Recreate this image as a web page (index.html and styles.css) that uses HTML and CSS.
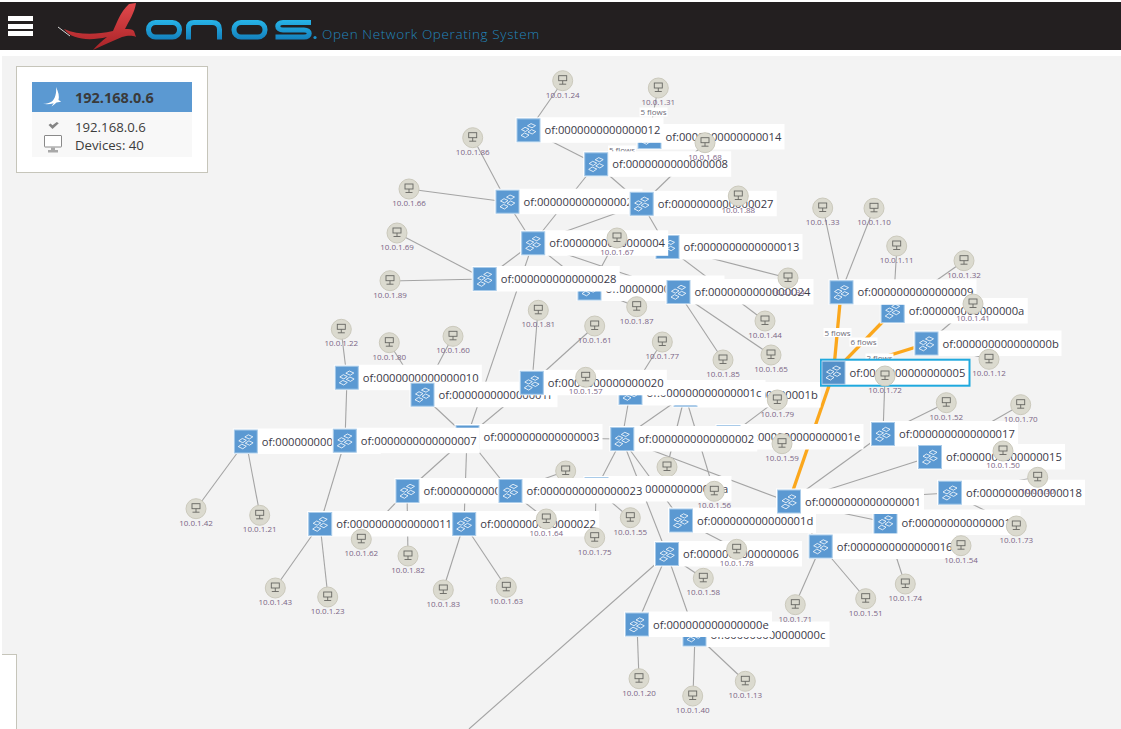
FILE: index.html
```html
<!DOCTYPE html>
<html lang="en">
<head>
<meta charset="utf-8">
<title>ONOS</title>
<link rel="stylesheet" href="styles.css">
</head>
<body>
<header class="masthead">
  <button class="menu" aria-label="Menu"><span></span><span></span><span></span></button>
  <svg class="logo" viewBox="55 2 265 48" role="img" aria-label="ONOS logo">
    <defs>
      <linearGradient id="wing" x1="0" y1="0" x2="0" y2="1"><stop offset="0" stop-color="#e2494c"/><stop offset="1" stop-color="#a82327"/></linearGradient>
      <linearGradient id="blue" gradientUnits="userSpaceOnUse" x1="0" y1="20" x2="0" y2="40"><stop offset="0" stop-color="#27b4e8"/><stop offset="1" stop-color="#137fbc"/></linearGradient>
    </defs>
    <path class="streak" d="M58 27 L70 36"/>
    <path fill="url(#wing)" d="M64 29 C78 35 95 35 113 31 C117 23 120 12 129 4 L136 3 C135 12 129 21 125 29 C129 29 132 29 134 31 L136 37 C131 35 127 36 122 37 C112 41 102 46 93 50 C97 45 102 41 107 37 C90 41 72 40 64 29 Z"/>
    <rect class="wm" x="148.500" y="22.500" width="31" height="14.500" rx="7"/>
    <path class="wm" d="M188.500 39.500 V28 C188.500 24.500 190.500 22.500 194 22.500 H212 C217 22.500 219.500 25 219.500 29.500 V39.500"/>
    <rect class="wm" x="234" y="22.500" width="31" height="14.500" rx="7"/>
    <path class="wm" d="M311 22.500 H283 C276 22.500 276 30 283 30 H304 C311 30 311 37 304 37 H275.500"/>
    <circle class="dot" cx="315" cy="37.500" r="1.600"/>
  </svg>
  <h1 class="tagline">Open Network Operating System</h1>
</header>

<main class="stage">
  <svg class="topo" viewBox="2 56 1119 673" aria-label="Network topology">
    <defs>
      <symbol id="sw" viewBox="0 0 23 23" overflow="visible">
        <rect class="swbg" x="0" y="0" width="23" height="23"/>
        <g class="swglyph">
          <path d="M10.500 7 L14 4.800 L18.500 6.800 L15 9 Z"/>
          <path d="M4.500 10.800 L8 8.500 L12 10.300 L8.500 12.700 Z"/>
          <path d="M11 13.200 L14.600 10.800 L18.800 12.800 L15.200 15.200 Z"/>
          <path d="M4 16.600 L7.500 14.200 L12 16.200 L8.500 18.800 Z"/>
        </g>
      </symbol>
      <g id="hostglyph" class="hg">
        <circle class="hc" r="10"/>
        <rect class="hi" x="-4" y="-5" width="8" height="5"/>
        <path class="hi" d="M0 0 V3.500 M-3.500 3.500 H3.500"/>
      </g>
    </defs>

    <g class="links">
      <line x1="563" y1="81" x2="529" y2="130"/>
      <line x1="658" y1="88" x2="649" y2="137"/>
      <line x1="705" y1="143" x2="642" y2="204"/>
      <line x1="473" y1="138" x2="507" y2="202"/>
      <line x1="409" y1="189" x2="507" y2="202"/>
      <line x1="397" y1="233" x2="485" y2="279"/>
      <line x1="390" y1="281" x2="485" y2="279"/>
      <line x1="617" y1="238" x2="590" y2="288"/>
      <line x1="637" y1="307" x2="590" y2="288"/>
      <line x1="538" y1="310" x2="532" y2="383"/>
      <line x1="595" y1="326" x2="532" y2="383"/>
      <line x1="662" y1="342" x2="630" y2="393"/>
      <line x1="723" y1="360" x2="678" y2="292"/>
      <line x1="771" y1="355" x2="678" y2="292"/>
      <line x1="765" y1="321" x2="667" y2="247"/>
      <line x1="788" y1="278" x2="667" y2="247"/>
      <line x1="777" y1="400" x2="728" y2="437"/>
      <line x1="885" y1="376" x2="883" y2="434"/>
      <line x1="946" y1="403" x2="883" y2="434"/>
      <line x1="1021" y1="405" x2="930" y2="457"/>
      <line x1="973" y1="304" x2="926" y2="344"/>
      <line x1="989" y1="359" x2="926" y2="344"/>
      <line x1="964" y1="261" x2="893" y2="311"/>
      <line x1="897" y1="246" x2="893" y2="311"/>
      <line x1="874" y1="208" x2="841" y2="292"/>
      <line x1="823" y1="208" x2="841" y2="292"/>
      <line x1="1038" y1="477" x2="950" y2="493"/>
      <line x1="1016" y1="526" x2="950" y2="493"/>
      <line x1="905" y1="584" x2="885" y2="522"/>
      <line x1="866" y1="599" x2="821" y2="546"/>
      <line x1="795" y1="605" x2="821" y2="546"/>
      <line x1="737" y1="549" x2="681" y2="520"/>
      <line x1="703" y1="578" x2="667" y2="554"/>
      <line x1="630" y1="518" x2="596" y2="489"/>
      <line x1="595" y1="538" x2="596" y2="489"/>
      <line x1="546" y1="519" x2="510" y2="491"/>
      <line x1="667" y1="467" x2="685" y2="395"/>
      <line x1="714" y1="491" x2="685" y2="395"/>
      <line x1="566" y1="471" x2="510" y2="491"/>
      <line x1="529" y1="130" x2="596" y2="164"/>
      <line x1="596" y1="164" x2="533" y2="243"/>
      <line x1="596" y1="164" x2="642" y2="204"/>
      <line x1="507" y1="202" x2="533" y2="243"/>
      <line x1="533" y1="243" x2="642" y2="204"/>
      <line x1="642" y1="204" x2="667" y2="247"/>
      <line x1="533" y1="243" x2="485" y2="279"/>
      <line x1="533" y1="243" x2="467" y2="437"/>
      <line x1="533" y1="243" x2="590" y2="288"/>
      <line x1="533" y1="243" x2="678" y2="292"/>
      <line x1="347" y1="378" x2="345" y2="441"/>
      <line x1="341" y1="329" x2="347" y2="378"/>
      <line x1="389" y1="343" x2="422" y2="395"/>
      <line x1="453" y1="336" x2="422" y2="395"/>
      <line x1="422" y1="395" x2="467" y2="437"/>
      <line x1="532" y1="383" x2="467" y2="437"/>
      <line x1="467" y1="437" x2="622" y2="439"/>
      <line x1="467" y1="437" x2="407" y2="491"/>
      <line x1="467" y1="437" x2="464" y2="524"/>
      <line x1="467" y1="437" x2="510" y2="491"/>
      <line x1="345" y1="441" x2="320" y2="524"/>
      <line x1="246" y1="441" x2="196" y2="509"/>
      <line x1="246" y1="441" x2="260" y2="515"/>
      <line x1="320" y1="524" x2="275" y2="588"/>
      <line x1="320" y1="524" x2="328" y2="597"/>
      <line x1="464" y1="524" x2="443" y2="590"/>
      <line x1="464" y1="524" x2="506" y2="587"/>
      <line x1="407" y1="491" x2="361" y2="539"/>
      <line x1="407" y1="491" x2="408" y2="556"/>
      <line x1="622" y1="439" x2="630" y2="393"/>
      <line x1="622" y1="439" x2="685" y2="395"/>
      <line x1="622" y1="439" x2="596" y2="489"/>
      <line x1="622" y1="439" x2="667" y2="554"/>
      <line x1="622" y1="439" x2="681" y2="520"/>
      <line x1="622" y1="439" x2="789" y2="502"/>
      <line x1="789" y1="502" x2="883" y2="434"/>
      <line x1="789" y1="502" x2="930" y2="457"/>
      <line x1="789" y1="502" x2="950" y2="493"/>
      <line x1="789" y1="502" x2="885" y2="522"/>
      <line x1="789" y1="502" x2="821" y2="546"/>
      <line x1="667" y1="554" x2="637" y2="624"/>
      <line x1="667" y1="554" x2="695" y2="634"/>
      <line x1="667" y1="554" x2="469" y2="729"/>
      <line x1="637" y1="624" x2="639" y2="679"/>
      <line x1="695" y1="634" x2="693" y2="696"/>
      <line x1="695" y1="634" x2="745" y2="681"/>
    </g>
    <g class="links hot">
      <line x1="833.500" y1="372.700" x2="841" y2="292"/>
      <line x1="833.500" y1="372.700" x2="893" y2="311"/>
      <line x1="833.500" y1="372.700" x2="926" y2="344"/>
      <line x1="833.500" y1="372.700" x2="789" y2="502"/>
    </g>

    <g class="flow" transform="translate(653.500 112)"><rect x="-14" y="-4.500" width="28" height="9"/><text y="3">5 flows</text></g>
    <g class="flow" transform="translate(622 150)"><rect x="-14" y="-4.500" width="28" height="9"/><text y="3">5 flows</text></g>
    <g class="flow" transform="translate(837.500 332.500)"><rect x="-14" y="-4.500" width="28" height="9"/><text y="3">5 flows</text></g>
    <g class="flow" transform="translate(863.500 342)"><rect x="-14" y="-4.500" width="28" height="9"/><text y="3">6 flows</text></g>
    <g class="flow" transform="translate(879.500 358)"><rect x="-14" y="-4.500" width="28" height="9"/><text y="3">2 flows</text></g>

    <g class="host" transform="translate(565.700 471)"><use href="#hostglyph"/><text y="17">10.0.1.84</text></g>
    <g class="host" transform="translate(667 467)"><use href="#hostglyph"/><text y="17">10.0.1.76</text></g>

    <g class="sw" transform="translate(649.500 137)"><rect x="-13" y="-13" width="148" height="25.500"/><use href="#sw" x="-11.500" y="-11.500" width="23" height="23"/><text x="16" y="4">of:0000000000000014</text></g>
    <g class="sw" transform="translate(528.500 130.300)"><rect x="-13" y="-13" width="148" height="25.500"/><use href="#sw" x="-11.500" y="-11.500" width="23" height="23"/><text x="16" y="4">of:0000000000000012</text></g>
    <g class="sw" transform="translate(596.200 164.300)"><rect x="-13" y="-13" width="148" height="25.500"/><use href="#sw" x="-11.500" y="-11.500" width="23" height="23"/><text x="16" y="4">of:0000000000000008</text></g>
    <g class="sw" transform="translate(507.500 201.700)"><rect x="-13" y="-13" width="148" height="25.500"/><use href="#sw" x="-11.500" y="-11.500" width="23" height="23"/><text x="16" y="4">of:0000000000000021</text></g>
    <g class="sw" transform="translate(641.700 203.800)"><rect x="-13" y="-13" width="148" height="25.500"/><use href="#sw" x="-11.500" y="-11.500" width="23" height="23"/><text x="16" y="4">of:0000000000000027</text></g>
    <g class="sw" transform="translate(667.500 247)"><rect x="-13" y="-13" width="148" height="25.500"/><use href="#sw" x="-11.500" y="-11.500" width="23" height="23"/><text x="16" y="4">of:0000000000000013</text></g>
    <g class="sw" transform="translate(533.200 243.300)"><rect x="-13" y="-13" width="148" height="25.500"/><use href="#sw" x="-11.500" y="-11.500" width="23" height="23"/><text x="16" y="4">of:0000000000000004</text></g>
    <g class="sw" transform="translate(589.500 288.500)"><rect x="-13" y="-13" width="148" height="25.500"/><use href="#sw" x="-11.500" y="-11.500" width="23" height="23"/><text x="16" y="4">of:000000000000000d</text></g>
    <g class="sw" transform="translate(484.700 279)"><rect x="-13" y="-13" width="148" height="25.500"/><use href="#sw" x="-11.500" y="-11.500" width="23" height="23"/><text x="16" y="4">of:0000000000000028</text></g>
    <g class="sw" transform="translate(678.500 292)"><rect x="-13" y="-13" width="148" height="25.500"/><use href="#sw" x="-11.500" y="-11.500" width="23" height="23"/><text x="16" y="4">of:0000000000000024</text></g>
    <g class="sw" transform="translate(892.700 311)"><rect x="-13" y="-13" width="148" height="25.500"/><use href="#sw" x="-11.500" y="-11.500" width="23" height="23"/><text x="16" y="4">of:000000000000000a</text></g>
    <g class="sw" transform="translate(841.500 292.300)"><rect x="-13" y="-13" width="148" height="25.500"/><use href="#sw" x="-11.500" y="-11.500" width="23" height="23"/><text x="16" y="4">of:0000000000000009</text></g>
    <g class="sw" transform="translate(926.500 343.500)"><rect x="-13" y="-13" width="148" height="25.500"/><use href="#sw" x="-11.500" y="-11.500" width="23" height="23"/><text x="16" y="4">of:000000000000000b</text></g>
    <g class="sw" transform="translate(883 434)"><rect x="-13" y="-13" width="148" height="25.500"/><use href="#sw" x="-11.500" y="-11.500" width="23" height="23"/><text x="16" y="4">of:0000000000000017</text></g>
    <g class="sw" transform="translate(930 457)"><rect x="-13" y="-13" width="148" height="25.500"/><use href="#sw" x="-11.500" y="-11.500" width="23" height="23"/><text x="16" y="4">of:0000000000000015</text></g>
    <g class="sw" transform="translate(950 492.700)"><rect x="-13" y="-13" width="148" height="25.500"/><use href="#sw" x="-11.500" y="-11.500" width="23" height="23"/><text x="16" y="4">of:0000000000000018</text></g>
    <g class="sw" transform="translate(885.500 522.500)"><rect x="-13" y="-13" width="148" height="25.500"/><use href="#sw" x="-11.500" y="-11.500" width="23" height="23"/><text x="16" y="4">of:0000000000000019</text></g>
    <g class="sw" transform="translate(681 520.500)"><rect x="-13" y="-13" width="148" height="25.500"/><use href="#sw" x="-11.500" y="-11.500" width="23" height="23"/><text x="16" y="4">of:000000000000001d</text></g>
    <g class="sw" transform="translate(789 501.500)"><rect x="-13" y="-13" width="148" height="25.500"/><use href="#sw" x="-11.500" y="-11.500" width="23" height="23"/><text x="16" y="4">of:0000000000000001</text></g>
    <g class="sw" transform="translate(820.700 546.500)"><rect x="-13" y="-13" width="148" height="25.500"/><use href="#sw" x="-11.500" y="-11.500" width="23" height="23"/><text x="16" y="4">of:0000000000000016</text></g>
    <g class="sw" transform="translate(667 554)"><rect x="-13" y="-13" width="148" height="25.500"/><use href="#sw" x="-11.500" y="-11.500" width="23" height="23"/><text x="16" y="4">of:0000000000000006</text></g>
    <g class="sw" transform="translate(694.500 634.500)"><rect x="-13" y="-13" width="148" height="25.500"/><use href="#sw" x="-11.500" y="-11.500" width="23" height="23"/><text x="16" y="4">of:000000000000000c</text></g>
    <g class="sw" transform="translate(637 624.500)"><rect x="-13" y="-13" width="148" height="25.500"/><use href="#sw" x="-11.500" y="-11.500" width="23" height="23"/><text x="16" y="4">of:000000000000000e</text></g>
    <g class="sw" transform="translate(346.800 377.700)"><rect x="-13" y="-13" width="148" height="25.500"/><use href="#sw" x="-11.500" y="-11.500" width="23" height="23"/><text x="16" y="4">of:0000000000000010</text></g>
    <g class="sw" transform="translate(422.500 394.700)"><rect x="-13" y="-13" width="148" height="25.500"/><use href="#sw" x="-11.500" y="-11.500" width="23" height="23"/><text x="16" y="4">of:000000000000001f</text></g>
    <g class="sw" transform="translate(685.500 395)"><rect x="-13" y="-13" width="148" height="25.500"/><use href="#sw" x="-11.500" y="-11.500" width="23" height="23"/><text x="16" y="4">of:000000000000001b</text></g>
    <g class="sw" transform="translate(630.500 393)"><rect x="-13" y="-13" width="148" height="25.500"/><use href="#sw" x="-11.500" y="-11.500" width="23" height="23"/><text x="16" y="4">of:000000000000001c</text></g>
    <g class="sw" transform="translate(531.800 382.800)"><rect x="-13" y="-13" width="148" height="25.500"/><use href="#sw" x="-11.500" y="-11.500" width="23" height="23"/><text x="16" y="4">of:0000000000000020</text></g>
    <g class="sw" transform="translate(245.800 441.500)"><rect x="-13" y="-13" width="148" height="25.500"/><use href="#sw" x="-11.500" y="-11.500" width="23" height="23"/><text x="16" y="4">of:000000000000000f</text></g>
    <g class="sw" transform="translate(467.500 437)"><rect x="-13" y="-13" width="148" height="25.500"/><use href="#sw" x="-11.500" y="-11.500" width="23" height="23"/><text x="16" y="4">of:0000000000000003</text></g>
    <g class="sw" transform="translate(344.800 440.700)"><rect x="-13" y="-13" width="148" height="25.500"/><use href="#sw" x="-11.500" y="-11.500" width="23" height="23"/><text x="16" y="4">of:0000000000000007</text></g>
    <g class="sw" transform="translate(728.500 437)"><rect x="-13" y="-13" width="148" height="25.500"/><use href="#sw" x="-11.500" y="-11.500" width="23" height="23"/><text x="16" y="4">of:000000000000001e</text></g>
    <g class="sw" transform="translate(622.300 439)"><rect x="-13" y="-13" width="148" height="25.500"/><use href="#sw" x="-11.500" y="-11.500" width="23" height="23"/><text x="16" y="4">of:0000000000000002</text></g>
    <g class="sw" transform="translate(596.500 489)"><rect x="-13" y="-13" width="148" height="25.500"/><use href="#sw" x="-11.500" y="-11.500" width="23" height="23"/><text x="16" y="4">of:000000000000001a</text></g>
    <g class="sw" transform="translate(407.500 491)"><rect x="-13" y="-13" width="148" height="25.500"/><use href="#sw" x="-11.500" y="-11.500" width="23" height="23"/><text x="16" y="4">of:0000000000000025</text></g>
    <g class="sw" transform="translate(510.500 491)"><rect x="-13" y="-13" width="148" height="25.500"/><use href="#sw" x="-11.500" y="-11.500" width="23" height="23"/><text x="16" y="4">of:0000000000000023</text></g>
    <g class="sw" transform="translate(320.200 524)"><rect x="-13" y="-13" width="148" height="25.500"/><use href="#sw" x="-11.500" y="-11.500" width="23" height="23"/><text x="16" y="4">of:0000000000000011</text></g>
    <g class="sw" transform="translate(464.200 524)"><rect x="-13" y="-13" width="148" height="25.500"/><use href="#sw" x="-11.500" y="-11.500" width="23" height="23"/><text x="16" y="4">of:0000000000000022</text></g>
    <g class="sw selected" transform="translate(833.500 372.700)"><rect x="-12.500" y="-13" width="148.500" height="26"/><use href="#sw" x="-11.500" y="-11.500" width="23" height="23"/><text x="16" y="4">of:0000000000000005</text></g>

    <g class="host" transform="translate(562.700 80.700)"><use href="#hostglyph"/><text y="17">10.0.1.24</text></g>
    <g class="host" transform="translate(658.300 88)"><use href="#hostglyph"/><text y="17">10.0.1.31</text></g>
    <g class="host" transform="translate(705 142.700)"><use href="#hostglyph"/><text y="17">10.0.1.68</text></g>
    <g class="host" transform="translate(738.300 196)"><use href="#hostglyph"/><text y="17">10.0.1.88</text></g>
    <g class="host" transform="translate(617 238)"><use href="#hostglyph"/><text y="17">10.0.1.67</text></g>
    <g class="host" transform="translate(472.700 137.700)"><use href="#hostglyph"/><text y="17">10.0.1.86</text></g>
    <g class="host" transform="translate(409 189)"><use href="#hostglyph"/><text y="17">10.0.1.66</text></g>
    <g class="host" transform="translate(397 233)"><use href="#hostglyph"/><text y="17">10.0.1.69</text></g>
    <g class="host" transform="translate(390 280.700)"><use href="#hostglyph"/><text y="17">10.0.1.89</text></g>
    <g class="host" transform="translate(538.300 310.300)"><use href="#hostglyph"/><text y="17">10.0.1.81</text></g>
    <g class="host" transform="translate(594.700 326)"><use href="#hostglyph"/><text y="17">10.0.1.61</text></g>
    <g class="host" transform="translate(636.700 306.700)"><use href="#hostglyph"/><text y="17">10.0.1.87</text></g>
    <g class="host" transform="translate(341.300 329.300)"><use href="#hostglyph"/><text y="17">10.0.1.22</text></g>
    <g class="host" transform="translate(389.300 342.700)"><use href="#hostglyph"/><text y="17">10.0.1.80</text></g>
    <g class="host" transform="translate(453 336.300)"><use href="#hostglyph"/><text y="17">10.0.1.60</text></g>
    <g class="host" transform="translate(585.700 377.300)"><use href="#hostglyph"/><text y="17">10.0.1.57</text></g>
    <g class="host" transform="translate(662.300 342)"><use href="#hostglyph"/><text y="17">10.0.1.77</text></g>
    <g class="host" transform="translate(777.300 400)"><use href="#hostglyph"/><text y="17">10.0.1.79</text></g>
    <g class="host" transform="translate(782 443.700)"><use href="#hostglyph"/><text y="17">10.0.1.59</text></g>
    <g class="host" transform="translate(714.300 491.300)"><use href="#hostglyph"/><text y="17">10.0.1.56</text></g>
    <g class="host" transform="translate(723 360)"><use href="#hostglyph"/><text y="17">10.0.1.85</text></g>
    <g class="host" transform="translate(771 355)"><use href="#hostglyph"/><text y="17">10.0.1.65</text></g>
    <g class="host" transform="translate(765 321)"><use href="#hostglyph"/><text y="17">10.0.1.44</text></g>
    <g class="host" transform="translate(788 278)"><use href="#hostglyph"/><text y="17">10.0.1.34</text></g>
    <g class="host" transform="translate(822.700 208)"><use href="#hostglyph"/><text y="17">10.0.1.33</text></g>
    <g class="host" transform="translate(874 208.300)"><use href="#hostglyph"/><text y="17">10.0.1.10</text></g>
    <g class="host" transform="translate(896.700 246)"><use href="#hostglyph"/><text y="17">10.0.1.11</text></g>
    <g class="host" transform="translate(964 260.700)"><use href="#hostglyph"/><text y="17">10.0.1.32</text></g>
    <g class="host" transform="translate(973 304)"><use href="#hostglyph"/><text y="17">10.0.1.41</text></g>
    <g class="host" transform="translate(989 359.300)"><use href="#hostglyph"/><text y="17">10.0.1.12</text></g>
    <g class="host" transform="translate(885 376)"><use href="#hostglyph"/><text y="17">10.0.1.72</text></g>
    <g class="host" transform="translate(946.300 402.700)"><use href="#hostglyph"/><text y="17">10.0.1.52</text></g>
    <g class="host" transform="translate(1020.700 404.700)"><use href="#hostglyph"/><text y="17">10.0.1.70</text></g>
    <g class="host" transform="translate(1003 451)"><use href="#hostglyph"/><text y="17">10.0.1.50</text></g>
    <g class="host" transform="translate(1037.700 477.300)"><use href="#hostglyph"/><text y="17">10.0.1.30</text></g>
    <g class="host" transform="translate(1016.300 526)"><use href="#hostglyph"/><text y="17">10.0.1.73</text></g>
    <g class="host" transform="translate(961 545.700)"><use href="#hostglyph"/><text y="17">10.0.1.54</text></g>
    <g class="host" transform="translate(905.300 584)"><use href="#hostglyph"/><text y="17">10.0.1.74</text></g>
    <g class="host" transform="translate(865.700 598.700)"><use href="#hostglyph"/><text y="17">10.0.1.51</text></g>
    <g class="host" transform="translate(795.300 604.700)"><use href="#hostglyph"/><text y="17">10.0.1.71</text></g>
    <g class="host" transform="translate(736.700 549.300)"><use href="#hostglyph"/><text y="17">10.0.1.78</text></g>
    <g class="host" transform="translate(703.300 578.300)"><use href="#hostglyph"/><text y="17">10.0.1.58</text></g>
    <g class="host" transform="translate(630.300 517.700)"><use href="#hostglyph"/><text y="17">10.0.1.55</text></g>
    <g class="host" transform="translate(594.700 537.700)"><use href="#hostglyph"/><text y="17">10.0.1.75</text></g>
    <g class="host" transform="translate(546.300 519)"><use href="#hostglyph"/><text y="17">10.0.1.64</text></g>
    <g class="host" transform="translate(361.300 539.300)"><use href="#hostglyph"/><text y="17">10.0.1.62</text></g>
    <g class="host" transform="translate(408 556)"><use href="#hostglyph"/><text y="17">10.0.1.82</text></g>
    <g class="host" transform="translate(443.300 590)"><use href="#hostglyph"/><text y="17">10.0.1.83</text></g>
    <g class="host" transform="translate(506.300 587.300)"><use href="#hostglyph"/><text y="17">10.0.1.63</text></g>
    <g class="host" transform="translate(196 508.700)"><use href="#hostglyph"/><text y="17">10.0.1.42</text></g>
    <g class="host" transform="translate(259.700 515.300)"><use href="#hostglyph"/><text y="17">10.0.1.21</text></g>
    <g class="host" transform="translate(275.300 588)"><use href="#hostglyph"/><text y="17">10.0.1.43</text></g>
    <g class="host" transform="translate(327.700 597)"><use href="#hostglyph"/><text y="17">10.0.1.23</text></g>
    <g class="host" transform="translate(639 678.700)"><use href="#hostglyph"/><text y="17">10.0.1.20</text></g>
    <g class="host" transform="translate(692.700 696)"><use href="#hostglyph"/><text y="17">10.0.1.40</text></g>
    <g class="host" transform="translate(745.300 681.300)"><use href="#hostglyph"/><text y="17">10.0.1.13</text></g>
  </svg>

  <section class="summary">
    <div class="summary-head">
      <svg class="birdie" viewBox="0 0 20 20" aria-hidden="true"><path d="M13 0 C15.500 5 16.500 9.500 15.500 13 C16.500 13.500 17.500 14 18 14.800 L13.500 15.500 C12 16.800 10.500 18.200 8.500 19.500 C9.300 18.300 10 17.400 10.700 16.300 C7 17.300 3 17.500 0 16.800 C3.500 16.800 6.500 16 8.800 14.500 C12 12 13.800 6 13 0 Z"/></svg>
      <h2>192.168.0.6</h2>
    </div>
    <div class="summary-body">
      <div class="summary-icons">
        <svg class="check" viewBox="0 0 11 7" aria-hidden="true"><path d="M0.500 3 L2.500 1.500 L4.500 3.300 L8.800 0 L10.800 1.300 L4.500 7 Z"/></svg>
        <svg class="monitor" viewBox="0 0 18 18" aria-hidden="true"><rect class="mon-frame" x="0.500" y="0.500" width="17" height="11.500" rx="0.500"/><path class="mon-stand" d="M7 12.500 H11 V15 H14 V17.500 H4 V15 H7 Z"/></svg>
      </div>
      <div class="summary-text">
        <div>192.168.0.6</div>
        <div>Devices: 40</div>
      </div>
    </div>
  </section>

  <aside class="corner-panel"></aside>
</main>
</body>
</html>
```

FILE: styles.css
```css
* { box-sizing: border-box; }

html, body {
  margin: 0;
  height: 100%;
  overflow: hidden;
  background: #fff;
}

body {
  padding-top: 2px;
  font-family: "Open Sans", "Liberation Sans", sans-serif;
}

.masthead {
  display: flex;
  align-items: flex-start;
  height: 48px;
  background: #231f20;
  overflow: hidden;
}

.menu {
  display: flex;
  flex-direction: column;
  gap: 2.500px;
  margin: 14px 0 0 8px;
  padding: 0;
  border: 0;
  background: none;
}

.menu span {
  display: block;
  width: 25px;
  height: 5px;
  background: #fff;
}

.logo {
  display: block;
  width: 265px;
  height: 48px;
  margin-left: 22px;
  flex: none;
}

.streak { fill: none; stroke: #d8d8d8; stroke-width: 1; }
.wm { fill: none; stroke: url(#blue); stroke-width: 5; }
.dot { fill: #1b8fc9; }

.tagline {
  margin: 23px 0 0 2px;
  font-size: 13.500px;
  line-height: 18px;
  font-weight: 300;
  letter-spacing: 0.620px;
  color: #2286bd;
  white-space: nowrap;
}

.stage {
  position: relative;
  width: 1119px;
  height: 673px;
  margin: 6px 0 0 2px;
  background: #f3f3f3;
  overflow: hidden;
}

.topo {
  display: block;
  width: 1119px;
  height: 673px;
}

.links line { stroke: #a4a4a4; stroke-width: 1.100; }
.links.hot line { stroke: #fba71c; stroke-width: 3.300; }

.flow rect { fill: #fff; }
.flow text {
  font-size: 8px;
  fill: #6c6c78;
  text-anchor: middle;
}

.sw { --icon: #5b99d2; }
.sw.selected { --icon: #5490c8; }

.sw rect { fill: #fff; }
.sw text {
  font-size: 11.200px;
  fill: #3b3a48;
}

.swbg {
  fill: var(--icon);
  stroke: #a9cbe9;
  stroke-width: 1;
}

.swglyph path {
  fill: none;
  stroke: #fff;
  stroke-width: 0.800;
}

.hc { fill: #dbdacf; stroke: #cbc9bc; stroke-width: 1; }
.hi { fill: none; stroke: #666662; stroke-width: 0.900; }
.host text {
  font-size: 8px;
  fill: #7a6585;
  text-anchor: middle;
}

.sw.selected rect { stroke: #1fa9de; stroke-width: 2; }

.summary {
  position: absolute;
  left: 14px;
  top: 10px;
  width: 192px;
  height: 107px;
  padding: 15px;
  background: #fff;
  border: 1px solid #c6c5ba;
}

.summary-head {
  display: flex;
  align-items: center;
  height: 30px;
  padding-left: 11px;
  background: #5b99d2;
}

.birdie { width: 20px; height: 20px; flex: none; }
.birdie path { fill: #fff; }

.summary-head h2 {
  margin: 0 0 0 12px;
  font-size: 14.500px;
  font-weight: 700;
  color: #3a3a3a;
}

.summary-body {
  display: flex;
  height: 45px;
  padding: 6px 0 0 12px;
  background: #f8f8f8;
}

.summary-icons {
  display: flex;
  flex-direction: column;
  align-items: center;
  gap: 6px;
  width: 18px;
  flex: none;
}

.check { display: block; width: 11px; height: 7px; margin-top: 4px; }
.check path { fill: #858585; }

.monitor { display: block; width: 18px; height: 18px; }
.mon-frame { fill: #fff; stroke: #8a8a8a; stroke-width: 1; }
.mon-stand { fill: #a8a8a8; }

.summary-text {
  margin-left: 13px;
  font-size: 13.200px;
  line-height: 18px;
  color: #3c3c3c;
}

.corner-panel {
  position: absolute;
  left: -20px;
  top: 598px;
  width: 35px;
  height: 95px;
  background: #fff;
  border: 1px solid #c6c5ba;
}
```
